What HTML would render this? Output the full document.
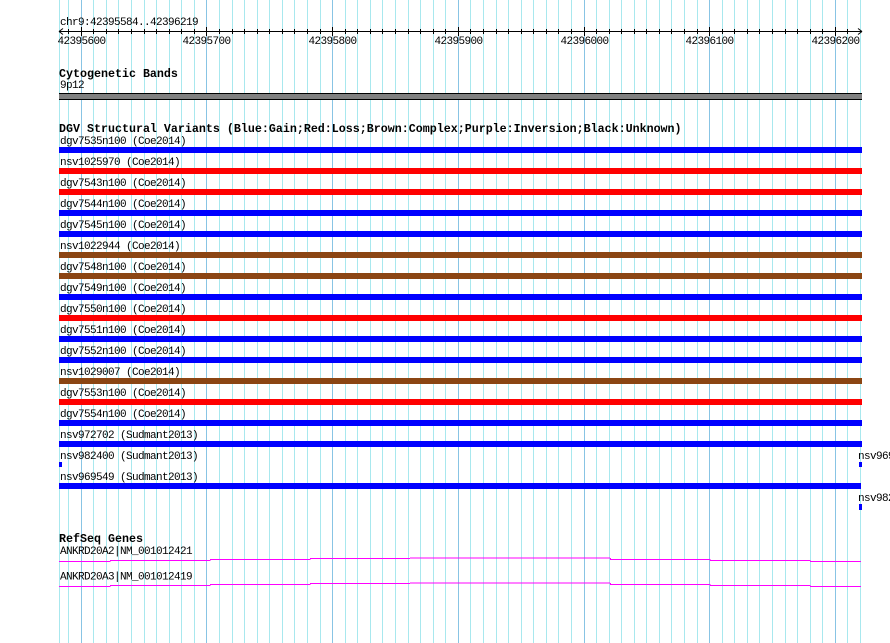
<!DOCTYPE html>
<html><head><meta charset="utf-8"><style>
html,body{margin:0;padding:0;background:#fff;width:890px;height:643px;overflow:hidden}
svg{display:block}
text{font-family:"Liberation Mono","DejaVu Sans Mono",monospace;font-size:11px;letter-spacing:-0.6px;fill:#000}
.b{font-weight:bold;font-size:11.67px;letter-spacing:0}
</style></head><body>
<svg id="s" width="890" height="643" xmlns="http://www.w3.org/2000/svg"></svg>
<script>
var s=document.getElementById('s'),h='';
function L(x1,y1,x2,y2,c,w){h+='<line x1="'+x1+'" y1="'+y1+'" x2="'+x2+'" y2="'+y2+'" stroke="'+c+'" stroke-width="'+(w||1)+'"/>';}
function R(x,y,w,ht,c){h+='<rect x="'+x+'" y="'+y+'" width="'+w+'" height="'+ht+'" fill="'+c+'"/>';}
function T(x,y,t,cl,a){h+='<text x="'+x+'" y="'+y+'"'+(cl?' class="'+cl+'"':'')+(a?' text-anchor="'+a+'"':'')+'>'+t+'</text>';}
L(59.5,0,59.5,643,'#a8e8ee');
for(var k=-1;k<=62;k++){var x=Math.round(80.7+12.57*k)+0.5;var maj=(k%10==0);L(x,0,x,643,maj?'#88c4e4':'#a8e8ee');}
L(59,31.5,862,31.5,'#000');
for(var k=-1;k<=61;k++){var x=Math.round(80.7+12.57*k)+0.5;var maj=(k%10==0);L(x,maj?27:29,x,maj?36:34,'#000');}
L(59,31.5,63,28.5,'#000');L(59,31.5,63,34.5,'#000');
L(862,31.5,858,28.5,'#000');L(862,31.5,858,34.5,'#000');
T(60,25,'chr9:42395584..42396219');
var labs=['42395600','42395700','42395800','42395900','42396000','42396100','42396200'];
for(var i=0;i<7;i++){T(Math.round(80.7+125.7*i)+0.5,44,labs[i],null,'middle');}
T(59,77,'Cytogenetic Bands','b');
T(60,88,'9p12');
R(59,93,803,7,'#000');R(59,94,803,5,'#808080');
T(59,132,'DGV Structural Variants (Blue:Gain;Red:Loss;Brown:Complex;Purple:Inversion;Black:Unknown)','b');
var B='#0000ff',Rd='#ff0000',Br='#8b4513';
var rows=[['dgv7535n100 (Coe2014)',B],['nsv1025970 (Coe2014)',Rd],['dgv7543n100 (Coe2014)',Rd],['dgv7544n100 (Coe2014)',B],['dgv7545n100 (Coe2014)',B],['nsv1022944 (Coe2014)',Br],['dgv7548n100 (Coe2014)',Br],['dgv7549n100 (Coe2014)',B],['dgv7550n100 (Coe2014)',Rd],['dgv7551n100 (Coe2014)',B],['dgv7552n100 (Coe2014)',B],['nsv1029007 (Coe2014)',Br],['dgv7553n100 (Coe2014)',Rd],['dgv7554n100 (Coe2014)',B],['nsv972702 (Sudmant2013)',B]];
for(var i=0;i<rows.length;i++){T(60,144+21*i,rows[i][0]);R(59,147+21*i,803,6,rows[i][1]);}
T(60,459,'nsv982400 (Sudmant2013)');R(59,462,3,5,B);
T(858,459,'nsv969');R(859,462,3,5,B);
T(60,480,'nsv969549 (Sudmant2013)');R(59,483,802,6,B);
T(858,501,'nsv982');R(859,504,3,6,B);
T(59,542,'RefSeq Genes','b');
T(60,554,'ANKRD20A2|NM_001012421');
T(60,579.5,'ANKRD20A3|NM_001012419');
var segs=[[59,110,561],[110,210,560],[210,310,559],[310,410,558],[410,610,557.5],[610,710,559],[710,810,560],[810,861,561]];
for(var g=0;g<2;g++){for(var i=0;i<segs.length;i++){var sg=segs[i];var y=sg[2]+25*g+0.5;L(sg[0],y,sg[1],y,'#ff00ff');if(i>0){L(sg[0]+0.5,segs[i-1][2]+25*g+0.5,sg[0]+0.5,y,'#ff00ff');}}}
s.innerHTML=h;
</script>
</body></html>
